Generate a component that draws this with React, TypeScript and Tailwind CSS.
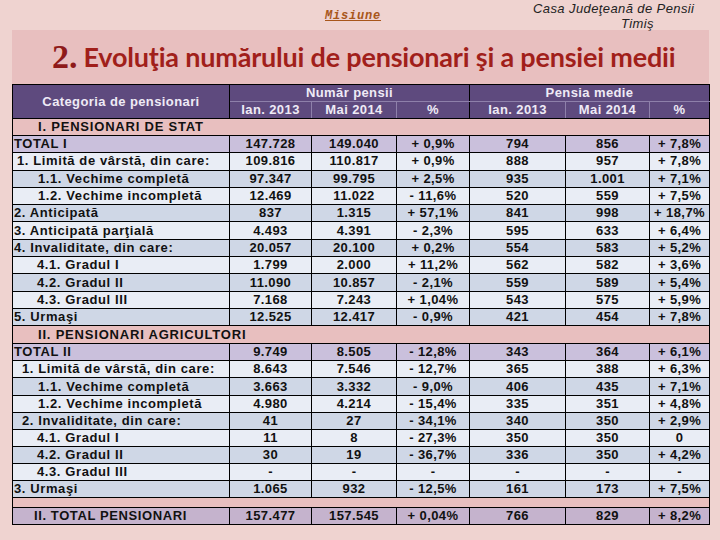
type Row = {
  label: string;
  indent: string;
  tone: "total" | "light" | "dark" | "grand";
  cells: string[];
};

const sectionI: Row[] = [
  { label: "TOTAL I", indent: "pl-[1px]", tone: "total", cells: ["147.728", "149.040", "+ 0,9%", "794", "856", "+ 7,8%"] },
  { label: "1. Limită de vârstă, din care:", indent: "pl-[4px]", tone: "light", cells: ["109.816", "110.817", "+ 0,9%", "888", "957", "+ 7,8%"] },
  { label: "1.1. Vechime completă", indent: "pl-[25px]", tone: "dark", cells: ["97.347", "99.795", "+ 2,5%", "935", "1.001", "+ 7,1%"] },
  { label: "1.2. Vechime incompletă", indent: "pl-[25px]", tone: "light", cells: ["12.469", "11.022", "- 11,6%", "520", "559", "+ 7,5%"] },
  { label: "2. Anticipată", indent: "pl-[1px]", tone: "dark", cells: ["837", "1.315", "+ 57,1%", "841", "998", "+ 18,7%"] },
  { label: "3. Anticipată parţială", indent: "pl-[1px]", tone: "light", cells: ["4.493", "4.391", "- 2,3%", "595", "633", "+ 6,4%"] },
  { label: "4. Invaliditate, din care:", indent: "pl-[1px]", tone: "dark", cells: ["20.057", "20.100", "+ 0,2%", "554", "583", "+ 5,2%"] },
  { label: "4.1. Gradul I", indent: "pl-[24px]", tone: "light", cells: ["1.799", "2.000", "+ 11,2%", "562", "582", "+ 3,6%"] },
  { label: "4.2. Gradul II", indent: "pl-[24px]", tone: "dark", cells: ["11.090", "10.857", "- 2,1%", "559", "589", "+ 5,4%"] },
  { label: "4.3. Gradul III", indent: "pl-[24px]", tone: "light", cells: ["7.168", "7.243", "+ 1,04%", "543", "575", "+ 5,9%"] },
  { label: "5. Urmaşi", indent: "pl-[1px]", tone: "dark", cells: ["12.525", "12.417", "- 0,9%", "421", "454", "+ 7,8%"] },
];

const sectionII: Row[] = [
  { label: "TOTAL II", indent: "pl-[1px]", tone: "total", cells: ["9.749", "8.505", "- 12,8%", "343", "364", "+ 6,1%"] },
  { label: "1. Limită de vârstă, din care:", indent: "pl-[9px]", tone: "light", cells: ["8.643", "7.546", "- 12,7%", "365", "388", "+ 6,3%"] },
  { label: "1.1. Vechime completă", indent: "pl-[25px]", tone: "dark", cells: ["3.663", "3.332", "- 9,0%", "406", "435", "+ 7,1%"] },
  { label: "1.2. Vechime incompletă", indent: "pl-[25px]", tone: "light", cells: ["4.980", "4.214", "- 15,4%", "335", "351", "+ 4,8%"] },
  { label: "2. Invaliditate, din care:", indent: "pl-[9px]", tone: "dark", cells: ["41", "27", "- 34,1%", "340", "350", "+ 2,9%"] },
  { label: "4.1. Gradul I", indent: "pl-[24px]", tone: "light", cells: ["11", "8", "- 27,3%", "350", "350", "0"] },
  { label: "4.2. Gradul II", indent: "pl-[24px]", tone: "dark", cells: ["30", "19", "- 36,7%", "336", "350", "+ 4,2%"] },
  { label: "4.3. Gradul III", indent: "pl-[24px]", tone: "light", cells: ["-", "-", "-", "-", "-", "-"] },
  { label: "3. Urmaşi", indent: "pl-[1px]", tone: "dark", cells: ["1.065", "932", "- 12,5%", "161", "173", "+ 7,5%"] },
];

const grand: Row = {
  label: "II. TOTAL PENSIONARI",
  indent: "pl-[21px]",
  tone: "grand",
  cells: ["157.477", "157.545", "+ 0,04%", "766", "829", "+ 8,2%"],
};

const toneBg = {
  total: "bg-[#cac0dc]",
  light: "bg-[#e9edf5]",
  dark: "bg-[#cfd7e6]",
  grand: "bg-[#c5b3cd]",
};

function DataRow({ row, h }: { row: Row; h: string }) {
  return (
    <tr className={`${toneBg[row.tone]} ${h}`}>
      <td className={`border border-black ${row.indent} text-left whitespace-nowrap tracking-[0.6px]`}>{row.label}</td>
      {row.cells.map((c, i) => (
        <td key={i} className="border border-black text-center whitespace-nowrap">
          {c}
        </td>
      ))}
    </tr>
  );
}

function SectionRow({ label, h }: { label: string; h: string }) {
  return (
    <tr className={h}>
      <td colSpan={7} className="border-x border-black pl-[25px] text-left tracking-[0.8px] whitespace-nowrap">
        {label}
      </td>
    </tr>
  );
}

export default function App() {
  return (
    <div className="w-[720px] h-[540px] bg-[#efd3d0] overflow-hidden font-['Liberation_Sans',Arial,sans-serif]">
      {/* top strip */}
      <div className="h-[30px] flex">
        <a className="ml-[325px] mt-[9px] h-fit font-['Liberation_Mono',monospace] italic font-bold text-[12px] leading-[14px] text-[#a8561a] underline tracking-[0.8px]">
          Misiune
        </a>
        <div className="ml-[152px] mt-[1px] italic text-[13px] leading-[15px] tracking-[0.4px] text-[#222] whitespace-nowrap">
          <div>Casa Judeţeană de Pensii</div>
          <div className="pl-[88px]">Timiş</div>
        </div>
      </div>

      <div className="ml-[12px] w-[697px] bg-[#e8bfbf]">
        <div className="h-[54px] flex items-center pl-[40px] whitespace-nowrap">
          <span className="font-['Liberation_Serif',serif] font-bold text-[34px] leading-[36px] text-[#8e1a1a] mr-[6px]">2.</span>
          <span className="font-['Lato',sans-serif] font-bold text-[27px] leading-[36px] text-[#a11f1b] tracking-[-0.2px]">
            Evoluţia numărului de pensionari şi a pensiei medii
          </span>
        </div>

        <table className="w-[697px] table-fixed border-collapse text-[13px] leading-[14px] font-bold text-[#111] tracking-[0.4px]">
          <colgroup>
            <col className="w-[217px]" />
            <col className="w-[82px]" />
            <col className="w-[85px]" />
            <col className="w-[73px]" />
            <col className="w-[96px]" />
            <col className="w-[84px]" />
            <col className="w-[60px]" />
          </colgroup>
          <thead className="bg-[#5e4a7e] text-[#efeaf6]">
            <tr className="h-[17px]">
              <th rowSpan={2} className="border border-black font-bold">
                Categoria de pensionari
              </th>
              <th colSpan={3} className="border border-black border-b-[#8e80aa] font-bold">
                Număr pensii
              </th>
              <th colSpan={3} className="border border-black border-b-[#8e80aa] font-bold">
                Pensia medie
              </th>
            </tr>
            <tr className="h-[17px]">
              <th className="border border-black border-r-[#8e80aa] font-bold">Ian. 2013</th>
              <th className="border border-black border-x-[#8e80aa] font-bold">Mai 2014</th>
              <th className="border border-black border-l-[#8e80aa] font-bold">%</th>
              <th className="border border-black border-r-[#8e80aa] font-bold">Ian. 2013</th>
              <th className="border border-black border-x-[#8e80aa] font-bold">Mai 2014</th>
              <th className="border border-black border-l-[#8e80aa] font-bold">%</th>
            </tr>
          </thead>
          <tbody>
            <SectionRow label="I. PENSIONARI DE STAT" h="h-[17px]" />
            {sectionI.map((r, i) => (
              <DataRow key={"a" + i} row={r} h="h-[17.3px]" />
            ))}
            <SectionRow label="II. PENSIONARI AGRICULTORI" h="h-[18px]" />
            {sectionII.map((r, i) => (
              <DataRow key={"b" + i} row={r} h="h-[17.1px]" />
            ))}
            <tr className="h-[10px]">
              <td colSpan={7} className="border-x border-black" />
            </tr>
            <DataRow row={grand} h="h-[17px]" />
          </tbody>
        </table>
      </div>
    </div>
  );
}
